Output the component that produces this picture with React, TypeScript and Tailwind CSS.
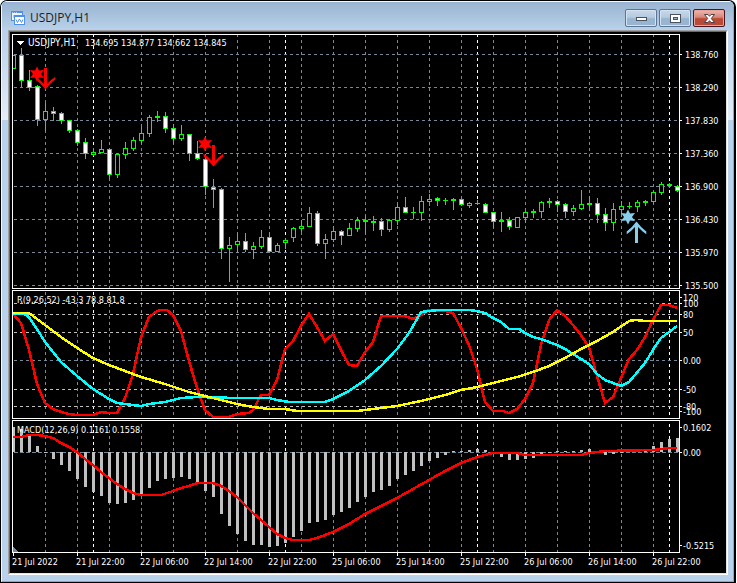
import type { ReactNode } from 'react';

const FIRST_BAR_X = 13;
const BAR_STEP = 8;
const PLOT_LEFT = 12;

const AXIS_FONT = "font-['DejaVu_Sans_Condensed','Open_Sans',sans-serif] text-[9px]";

type CandleKind = 'up' | 'down' | 'doji';

// kind, high, body top, body bottom, low
type Candle = [CandleKind, number, number, number, number];

const CANDLES: Candle[] = [
  ['up', 55, 55, 68, 68],
  ['down', 48, 55, 80, 86],
  ['down', 70, 80, 87, 90],
  ['down', 85, 86, 119, 125],
  ['up', 103, 111, 119, 130],
  ['down', 107, 111, 113, 120],
  ['down', 112, 113, 120, 123],
  ['down', 120, 120, 130, 132],
  ['down', 129, 130, 142, 145],
  ['down', 138, 142, 153, 158],
  ['up', 148, 152, 154, 155],
  ['up', 140, 149, 152, 152],
  ['down', 148, 149, 174, 178],
  ['up', 153, 154, 174, 177],
  ['up', 142, 148, 154, 158],
  ['up', 137, 140, 148, 150],
  ['up', 126, 133, 140, 143],
  ['up', 115, 117, 133, 136],
  ['doji', 111, 116, 117, 121],
  ['down', 112, 116, 128, 132],
  ['down', 124, 128, 138, 143],
  ['up', 125, 134, 138, 140],
  ['down', 134, 134, 153, 160],
  ['down', 141, 153, 158, 159],
  ['down', 155, 159, 186, 194],
  ['down', 179, 187, 189, 207],
  ['down', 188, 189, 248, 258],
  ['up', 237, 245, 248, 281],
  ['up', 233, 241, 244, 252],
  ['down', 233, 241, 249, 251],
  ['up', 242, 246, 249, 258],
  ['up', 230, 237, 246, 248],
  ['down', 232, 237, 251, 251],
  ['up', 243, 245, 251, 251],
  ['up', 238, 240, 242, 248],
  ['up', 227, 228, 237, 241],
  ['up', 220, 226, 228, 231],
  ['up', 207, 213, 226, 226],
  ['down', 211, 213, 243, 245],
  ['up', 234, 239, 243, 258],
  ['up', 226, 231, 239, 241],
  ['down', 230, 231, 235, 244],
  ['up', 223, 228, 235, 235],
  ['up', 217, 220, 228, 231],
  ['doji', 216, 220, 221, 233],
  ['doji', 216, 221, 222, 230],
  ['down', 218, 221, 229, 235],
  ['up', 219, 220, 229, 231],
  ['up', 204, 207, 220, 224],
  ['down', 197, 207, 212, 212],
  ['doji', 207, 212, 212, 218],
  ['up', 196, 201, 212, 220],
  ['up', 194, 199, 201, 205],
  ['down', 197, 198, 200, 205],
  ['doji', 198, 200, 200, 204],
  ['doji', 198, 199, 200, 209],
  ['down', 198, 199, 204, 205],
  ['up', 202, 203, 205, 207],
  ['doji', 200, 203, 203, 204],
  ['down', 203, 204, 212, 212],
  ['down', 212, 212, 221, 227],
  ['doji', 212, 220, 221, 231],
  ['down', 217, 220, 226, 229],
  ['up', 217, 217, 227, 227],
  ['up', 210, 212, 217, 222],
  ['doji', 209, 211, 212, 217],
  ['up', 201, 202, 211, 217],
  ['doji', 198, 201, 202, 207],
  ['down', 200, 201, 204, 211],
  ['down', 203, 204, 211, 217],
  ['up', 205, 208, 211, 215],
  ['up', 190, 204, 208, 209],
  ['doji', 196, 203, 204, 209],
  ['down', 198, 203, 214, 222],
  ['down', 208, 214, 222, 230],
  ['up', 203, 209, 222, 230],
  ['up', 201, 206, 209, 216],
  ['doji', 202, 206, 206, 208],
  ['up', 200, 202, 206, 211],
  ['doji', 200, 201, 202, 205],
  ['up', 191, 192, 201, 203],
  ['up', 182, 184, 192, 194],
  ['doji', 183, 184, 185, 187],
  ['down', 185, 186, 190, 191],
];

const OSC_FAST =
  '13,314 21,323 29,350 37,384 45,403 53,409 61,412 69,414 77,415 93,415 101,412 109,413 117,413 125,398 133,374 141,337 149,317 157,311 161,310 167,310 173,315 181,331 189,361 197,388 205,410 213,417 229,417 237,414 249,413 253,410 261,395 269,395 277,380 285,349 293,341 301,326 309,314 317,327 325,341 333,334 341,350 349,365 357,366 365,352 373,342 381,316 405,316 413,319 421,315 429,310 445,311 453,313 461,328 469,345 477,369 485,402 493,411 503,411 509,413 517,409 525,399 533,383 541,345 549,320 557,310 565,316 573,325 581,335 589,347 597,376 605,403 613,397 621,378 629,359 637,350 645,337 653,320 661,305 669,305 677,308';
const OSC_MID =
  '13,314 24,314 29,317 37,329 45,342 61,362 77,376 93,389 109,399 117,403 125,404 141,406 149,404 165,402 173,400 181,398 197,397 237,398 269,398 277,400 289,402 325,402 333,399 349,391 365,380 381,366 397,349 409,333 421,312 429,311 439,310 469,310 477,311 485,313 493,318 501,322 509,329 519,329 525,333 533,337 541,339 557,345 565,349 573,354 581,359 589,364 597,374 605,380 621,386 629,382 645,363 653,350 661,338 669,332 677,326';
const OSC_SLOW =
  '13,313 29,313 37,319 45,325 61,337 77,348 93,358 109,365 141,377 165,384 189,392 213,398 237,404 253,407 269,409 285,409 297,411 357,411 373,409 397,406 421,401 445,395 461,390 477,387 501,381 517,377 533,372 549,366 565,358 581,349 597,341 613,332 629,321 635,320 645,321 677,321';

const MACD_ZERO = 452;

const MACD_ENDS = [
  427, 429, 436, 446, 453, 459, 465, 471, 479, 487, 492, 496, 503, 504, 503, 500, 494, 488, 481, 479, 478,
  477, 479, 482, 491, 497, 514, 526, 534, 541, 545, 545, 547, 546, 543, 537, 531, 523, 522, 520, 515, 512,
  508, 502, 497, 492, 490, 486, 479, 475, 471, 466, 461, 458, 455, 451, 451, 450, 449, 450, 453, 457, 460,
  460, 459, 458, 454, 453, 451, 451, 451, 450, 449, 451, 455, 454, 453, 451, 451, 449, 446, 442, 439, 438,
];

const MACD_SIGNAL =
  '13,437 21,437 29,435 37,435 45,436 53,438 61,443 69,447 77,452 85,459 93,465 101,472 109,478 117,484 125,489 133,493 141,495 161,495 173,491 181,488 189,486 197,483 213,483 221,486 229,491 237,497 245,505 253,513 261,520 269,527 277,534 285,538 293,540 309,540 317,538 333,532 349,524 365,514 381,506 397,498 413,489 429,480 445,471 461,463 477,457 489,454 493,453 517,453 525,455 581,455 589,453 605,451 653,450 661,449 669,448 677,448';

const GRID_XS = Array.from({ length: 20 }, (_, i) => 45 + i * 32);
const DAY_XS = [93, 285, 477, 669];

const PRICE_LABELS = [
  { y: 54, text: '138.760' },
  { y: 87, text: '138.290' },
  { y: 120, text: '137.830' },
  { y: 153, text: '137.360' },
  { y: 186, text: '136.900' },
  { y: 219, text: '136.430' },
  { y: 252, text: '135.970' },
  { y: 285, text: '135.500' },
];

const OSC_LABELS = [
  { y: 297, text: '120' },
  { y: 303, text: '100' },
  { y: 314, text: '80' },
  { y: 332, text: '50' },
  { y: 360, text: '0.00' },
  { y: 389, text: '-50' },
  { y: 406, text: '-80' },
  { y: 411, text: '-100' },
];

const MACD_LABELS = [
  { y: 427, text: '0.1602' },
  { y: 452, text: '0.00' },
  { y: 545, text: '-0.5215' },
];

const TIME_LABELS = [
  '21 Jul 2022',
  '21 Jul 22:00',
  '22 Jul 06:00',
  '22 Jul 14:00',
  '22 Jul 22:00',
  '25 Jul 06:00',
  '25 Jul 14:00',
  '25 Jul 22:00',
  '26 Jul 06:00',
  '26 Jul 14:00',
  '26 Jul 22:00',
];

function barX(index: number) {
  return FIRST_BAR_X + index * BAR_STEP;
}

function VerticalGrid({ top, height }: { top: number; height: number }) {
  return (
    <g strokeDasharray="3 3" fill="none">
      {GRID_XS.map((x) => (
        <path key={x} d={`M${x + 0.5} ${top}v${height}`} stroke="#778899" />
      ))}
      {DAY_XS.map((x) => (
        <path key={x} d={`M${x + 0.5} ${top}v${height}`} stroke="#ffffff" />
      ))}
    </g>
  );
}

function Level({ y, color = '#778899', dash = '3 3' }: { y: number; color?: string; dash?: string }) {
  return <path d={`M14 ${y + 0.5}H4000`} stroke={color} strokeDasharray={dash} fill="none" />;
}

function CandleMark({ candle, x }: { candle: Candle; x: number }) {
  const [kind, high, top, bottom, low] = candle;
  const height = bottom - top + 1;
  return (
    <g fill="#00ff00">
      <rect x={x} y={high} width={1} height={low - high + 1} />
      <rect x={x - 2} y={top} width={5} height={height} />
      {kind !== 'doji' && (
        <rect x={x - 1} y={top + 1} width={3} height={height - 2} fill={kind === 'up' ? '#000000' : '#ffffff'} />
      )}
    </g>
  );
}

type PanelProps = {
  top: number;
  className: string;
  name: string;
  labels: { y: number; text: string }[];
  labelX: number;
  children: ReactNode;
};

function Panel({ top, className, name, labels, labelX, children }: PanelProps) {
  return (
    <section className={`flex ${className}`} aria-label={name}>
      <div className="min-w-0 flex-1 border border-white">
        <svg className={`block h-full w-full ${AXIS_FONT}`} shapeRendering="crispEdges">
          <g transform={`translate(${-PLOT_LEFT - 1} ${-top - 1})`}>{children}</g>
        </svg>
      </div>
      <svg className={`h-full w-[46px] shrink-0 overflow-visible ${AXIS_FONT}`} shapeRendering="crispEdges">
        {labels.map(({ y, text }) => (
          <g key={text} fill="#ffffff">
            <rect x={0} y={y - top} width={2} height={1} />
            <text x={labelX} y={y - top + 4}>
              {text}
            </text>
          </g>
        ))}
      </svg>
    </section>
  );
}

function PricePanel() {
  return (
    <Panel top={34} className="h-[255px]" name="USDJPY,H1" labels={PRICE_LABELS} labelX={5}>
      <VerticalGrid top={34} height={254} />
      {PRICE_LABELS.map(({ y }) => (
        <Level key={y} y={y} />
      ))}
      {CANDLES.map((candle, i) => (
        <CandleMark key={i} candle={candle} x={barX(i)} />
      ))}
      <Star cx={37} cy={74} color="#ff0000" />
      <Arrow transform="translate(45.5 68)" color="#ff0000" />
      <Star cx={205} cy={144} color="#ff0000" />
      <Arrow transform="translate(213.5 145)" color="#ff0000" />
      <Star cx={628} cy={217} color="#87ceeb" />
      <Arrow transform="translate(636.5 243) scale(1 -1)" color="#87ceeb" />
      <path d="M16 41h8l-4 4z" fill="#ffffff" />
      <text x={28} y={46} fill="#ffffff" className="text-[10px]">
        USDJPY,H1
      </text>
      <text x={85} y={46} fill="#ffffff">
        134.695 134.877 134.662 134.845
      </text>
    </Panel>
  );
}

function Star({ cx, cy, color }: { cx: number; cy: number; color: string }) {
  return (
    <path
      transform={`translate(${cx} ${cy})`}
      d="M0 -7.500L2 -3.400L7 -4L4 0L7 4L2 3.400L0 7.500L-2 3.400L-7 4L-4 0L-7 -4L-2 -3.400Z"
      fill={color}
      shapeRendering="geometricPrecision"
    />
  );
}

function Arrow({ transform, color }: { transform: string; color: string }) {
  return (
    <path
      transform={transform}
      d="M-1.500 0H1.500V16Q5 12 9.800 8.800V11.500Q4 16 0 21.500Q-4 16 -9.800 11.500V8.800Q-5 12 -1.500 16Z"
      fill={color}
      shapeRendering="geometricPrecision"
    />
  );
}

function OscillatorPanel() {
  return (
    <Panel top={290} className="h-[129px]" name="Oscillator" labels={OSC_LABELS} labelX={3}>
      <VerticalGrid top={292} height={126} />
      {[303, 314, 332, 389, 406].map((y) => (
        <Level key={y} y={y} color="#c0c0c0" />
      ))}
      <Level y={360} />
      <g fill="none" strokeWidth={2.5}>
        <polyline points={OSC_FAST} stroke="#ff0000" />
        <polyline points={OSC_MID} stroke="#00ffff" />
        <polyline points={OSC_SLOW} stroke="#ffff00" />
      </g>
      <text x={17} y={303} fill="#ffffff">
        R(9,26,52) -43.3 78.8 81.8
      </text>
    </Panel>
  );
}

function MacdPanel() {
  return (
    <Panel top={420} className="h-[133px]" name="MACD" labels={MACD_LABELS} labelX={3}>
      <VerticalGrid top={424} height={128} />
      <Level y={MACD_ZERO} dash="4 2" />
      {MACD_ENDS.map((end, i) => {
        const y = Math.min(end, MACD_ZERO);
        return <rect key={i} x={barX(i) - 1} y={y} width={3} height={Math.max(Math.abs(end - MACD_ZERO), 1)} fill="#c0c0c0" />;
      })}
      <polyline points={MACD_SIGNAL} fill="none" stroke="#ff0000" strokeWidth={2.5} />
      <path d="M13 547l5 5h-5z" fill="#778899" />
      <text x={17} y={433} fill="#ffffff">
        MACD(12,26,9) 0.1161 0.1558
      </text>
    </Panel>
  );
}

function TimeAxis() {
  return (
    <svg className={`block h-5 w-full overflow-visible ${AXIS_FONT}`} shapeRendering="crispEdges" fill="#ffffff">
      {TIME_LABELS.map((text, i) => (
        <g key={text}>
          <rect x={1 + i * 64} y={0} width={1} height={3} />
          <text x={i * 64} y={12}>
            {text}
          </text>
        </g>
      ))}
    </svg>
  );
}

function ChartIcon() {
  return (
    <svg className="mt-1 size-[15px]" viewBox="0 0 15 15" fill="none">
      <rect x="0.500" y="0.500" width="11" height="9" fill="#eef5ff" stroke="#4f8fe8" />
      <path d="M0 0h12v2H0z" fill="#4f8fe8" />
      <path d="M1 1.500h1M3 1.500h1M5 1.500h1M2.500 7v-3" stroke="#a9cbf7" />
      <rect x="3.500" y="4.500" width="10" height="9" fill="#ffffff" stroke="#4f8fe8" />
      <path d="M3 4h11v2H3z" fill="#4f8fe8" />
      <path d="M5 8.500l1.500 3 2-3.500 2 3.500 1.500-3" stroke="#4f8fe8" />
    </svg>
  );
}

function TitleButton({ label, danger, children }: { label: string; danger?: boolean; children: ReactNode }) {
  const tone = danger
    ? 'border-[#4a1420] bg-linear-to-b from-[#e9aea4] from-10% via-[#d98678] via-45% to-[#b84a36] to-55% shadow-[inset_0_0_0_1px_#e5a399]'
    : 'border-[#5c7595] bg-linear-to-b from-[#c4d5e8] from-10% via-[#b6cade] via-45% to-[#98b4d0] to-55% shadow-[inset_0_0_0_1px_#d5e3f1]';
  return (
    <button type="button" aria-label={label} className={`flex h-[18px] w-8 items-center justify-center rounded-[2px] border ${tone}`}>
      {children}
    </button>
  );
}

function TitleBar() {
  return (
    <header className="flex h-7 items-center bg-linear-to-b from-[#99b4d1] to-[#b9d1ea] pr-2 pl-[9px]">
      <ChartIcon />
      <h1 className="ml-1 flex-1 pt-1 font-['Open_Sans',sans-serif] text-[12px] text-[#1e1e1e]">USDJPY,H1</h1>
      <div className="flex gap-0.5 pt-1">
        <TitleButton label="Minimize">
          <svg className="mt-0.5 h-1 w-[11px]" viewBox="0 0 11 4">
            <rect x="0.500" y="0.500" width="10" height="3" fill="#ffffff" stroke="#4a5260" />
          </svg>
        </TitleButton>
        <TitleButton label="Maximize">
          <svg className="h-[9px] w-[11px]" viewBox="0 0 11 9" fill="none">
            <rect x="0.500" y="0.500" width="10" height="8" fill="#ffffff" stroke="#4a5260" />
            <rect x="3.500" y="3.500" width="4" height="2" fill="#98b4d0" stroke="#4a5260" />
          </svg>
        </TitleButton>
        <TitleButton label="Close" danger>
          <svg className="h-[9px] w-[11px]" viewBox="0 0 11 9">
            <path
              d="M0.500 0.500h3.500l1.500 1.800 1.500-1.800h3.500l-3.200 4 3.200 4h-3.500l-1.500-1.800-1.500 1.800h-3.500l3.200-4z"
              fill="#ffffff"
              stroke="#4f4048"
            />
          </svg>
        </TitleButton>
      </div>
    </header>
  );
}

export default function App() {
  return (
    <div className="mr-px overflow-hidden rounded-t-[7px] border border-r-2 border-black">
      <main className="rounded-t-[6px] border border-t-[#f4f9ff] border-r-[#3cc8ea] border-b-[#3cc8ea] border-l-[#f4f9ff] bg-[#b9d1ea]">
        <TitleBar />
        <div className="bg-linear-to-b from-[#b9d1ea] to-[#e2edf8] bg-[length:100%_90px] bg-no-repeat pr-[5px] pb-1.5 pl-1.5">
          <div className="border border-t-[#a0a0a0] border-r-white border-b-white border-l-[#a0a0a0]">
            <div className="border border-t-[#696969] border-r-[#e3e3e3] border-b-[#e3e3e3] border-l-[#696969] bg-black pt-0.5 pl-0.5">
              <div className="flex flex-col gap-px">
                <PricePanel />
                <OscillatorPanel />
                <MacdPanel />
              </div>
              <TimeAxis />
            </div>
          </div>
        </div>
      </main>
    </div>
  );
}
